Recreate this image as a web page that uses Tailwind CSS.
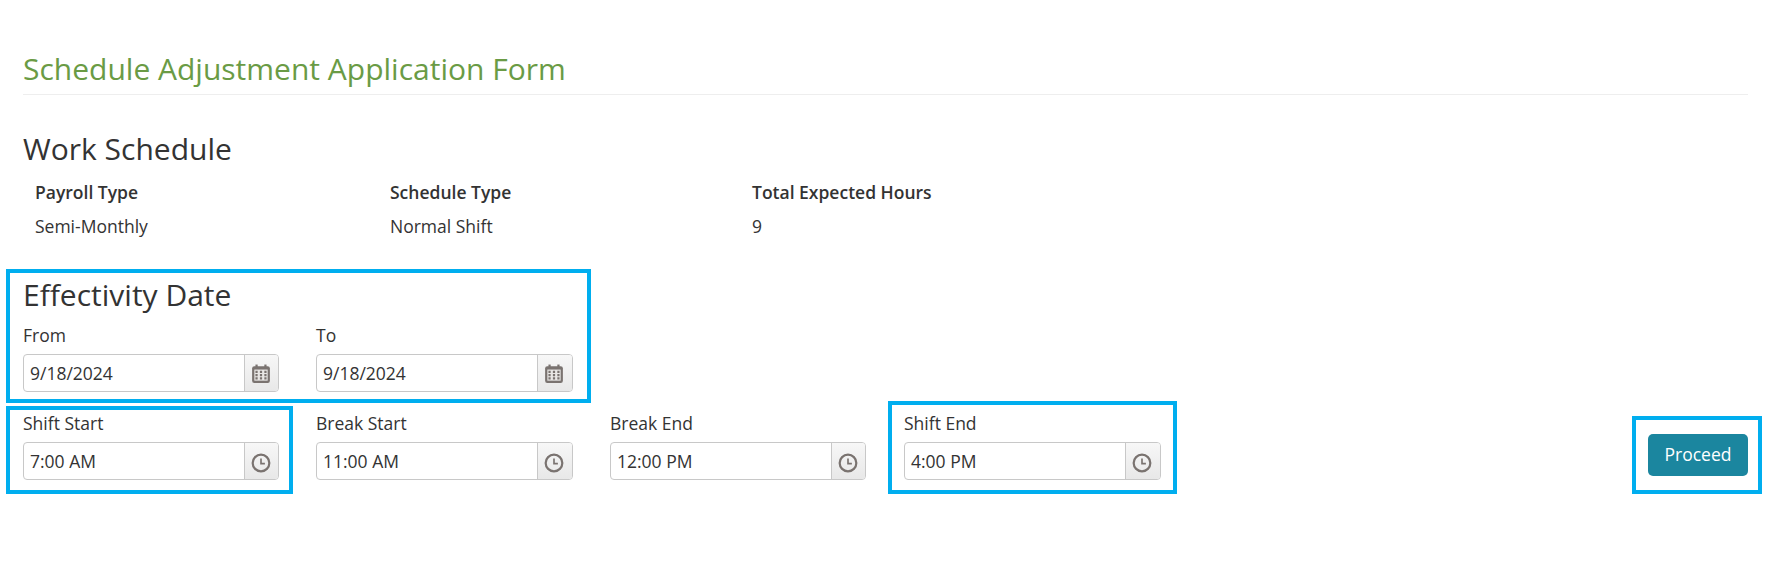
<!DOCTYPE html>
<html lang="en">
<head>
    <meta charset="UTF-8">
    <title>Schedule Adjustment Application Form</title>
    <script src="https://cdn.jsdelivr.net/npm/@tailwindcss/browser@4"></script>
</head>
<body class="bg-white text-[#333] font-['Open_Sans',sans-serif]">
    <!-- annotation boxes drawn over the form -->
    <div class="absolute left-[6px] top-[269px] w-[585px] h-[134px] border-4 border-[#00aeef]"></div>
    <div class="absolute left-[6px] top-[406px] w-[287px] h-[88px] border-4 border-[#00aeef]"></div>
    <div class="absolute left-[888px] top-[401px] w-[289px] h-[93px] border-4 border-[#00aeef]"></div>
    <div class="absolute left-[1632px] top-[416px] w-[130px] h-[78px] border-4 border-[#00aeef]"></div>

    <div class="w-[1771px] h-[580px] overflow-hidden pl-[23px] pr-[23px] pt-[49px]">
        <h1 class="text-[30px] leading-[40px] text-[#6a9b45] pb-[5px] border-b border-[#eeeeee]">Schedule Adjustment Application Form</h1>

        <h2 class="mt-[35px] text-[30px] leading-[38px] text-[#333]">Work Schedule</h2>
        <div class="mt-[12px] pl-[12px] flex text-[17.5px]">
            <div class="w-[355px]">
                <div class="font-semibold leading-[24px]">Payroll Type</div>
                <div class="mt-[10px] leading-[24px]">Semi-Monthly</div>
            </div>
            <div class="w-[362px]">
                <div class="font-semibold leading-[24px]">Schedule Type</div>
                <div class="mt-[10px] leading-[24px]">Normal Shift</div>
            </div>
            <div>
                <div class="font-semibold leading-[24px]">Total Expected Hours</div>
                <div class="mt-[10px] leading-[24px]">9</div>
            </div>
        </div>

        <h2 class="mt-[38px] text-[30px] leading-[38px] text-[#333]">Effectivity Date</h2>
        <div class="mt-[9px] flex gap-[37px]">
            <div class="w-[256px]">
                <label class="block text-[17.5px] leading-[24px]">From</label>
                <div class="mt-[7px] flex h-[38px] border border-[#c8c8c8] rounded-[4px] overflow-hidden">
                    <div class="flex-1 flex items-center pl-[6px] text-[17.5px]">9/18/2024</div>
                    <div class="w-[34px] flex items-center justify-center border-l border-[#c8c8c8] bg-gradient-to-b from-[#f7f7f7] to-[#e8e8e8]">
                        <svg width="20" height="20" viewBox="0 0 18 18" class="mt-[2px] mr-[2px]"><rect x="1" y="2" width="16" height="15" rx="2" fill="#7a7370"/><rect x="4" y="0.5" width="2" height="3" fill="#7a7370"/><rect x="12" y="0.5" width="2" height="3" fill="#7a7370"/><rect x="3" y="5" width="12" height="10" fill="#e8e6e4"/><path d="M4 6h2v2H4zM8 6h2v2H8zM12 6h2v2h-2zM4 9h2v2H4zM8 9h2v2H8zM12 9h2v2h-2zM4 12h2v2H4zM8 12h2v2H8zM12 12h2v2h-2z" fill="#7a7370"/></svg>
                    </div>
                </div>
            </div>
            <div class="w-[257px]">
                <label class="block text-[17.5px] leading-[24px]">To</label>
                <div class="mt-[7px] flex h-[38px] border border-[#c8c8c8] rounded-[4px] overflow-hidden">
                    <div class="flex-1 flex items-center pl-[6px] text-[17.5px]">9/18/2024</div>
                    <div class="w-[35px] flex items-center justify-center border-l border-[#c8c8c8] bg-gradient-to-b from-[#f7f7f7] to-[#e8e8e8]">
                        <svg width="20" height="20" viewBox="0 0 18 18" class="mt-[2px] mr-[2px]"><rect x="1" y="2" width="16" height="15" rx="2" fill="#7a7370"/><rect x="4" y="0.5" width="2" height="3" fill="#7a7370"/><rect x="12" y="0.5" width="2" height="3" fill="#7a7370"/><rect x="3" y="5" width="12" height="10" fill="#e8e6e4"/><path d="M4 6h2v2H4zM8 6h2v2H8zM12 6h2v2h-2zM4 9h2v2H4zM8 9h2v2H8zM12 9h2v2h-2zM4 12h2v2H4zM8 12h2v2H8zM12 12h2v2h-2z" fill="#7a7370"/></svg>
                    </div>
                </div>
            </div>
        </div>

        <div class="mt-[19px] flex items-start">
            <div class="flex gap-[37px]">
                <div class="w-[256px]">
                    <label class="block text-[17.5px] leading-[24px]">Shift Start</label>
                    <div class="mt-[7px] flex h-[38px] border border-[#c8c8c8] rounded-[4px] overflow-hidden">
                        <div class="flex-1 flex items-center pl-[6px] text-[17.5px]">7:00 AM</div>
                        <div class="w-[34px] flex items-center justify-center border-l border-[#c8c8c8] bg-gradient-to-b from-[#f7f7f7] to-[#e8e8e8]">
                            <svg width="20" height="20" viewBox="0 0 18 18" class="mt-[4px] mr-[2px]" fill="none" stroke="#7a7370"><circle cx="9" cy="9" r="7.5" stroke-width="2"/><path d="M9 5v4.5h3.5" stroke-width="1.5"/></svg>
                        </div>
                    </div>
                </div>
                <div class="w-[257px]">
                    <label class="block text-[17.5px] leading-[24px]">Break Start</label>
                    <div class="mt-[7px] flex h-[38px] border border-[#c8c8c8] rounded-[4px] overflow-hidden">
                        <div class="flex-1 flex items-center pl-[6px] text-[17.5px]">11:00 AM</div>
                        <div class="w-[35px] flex items-center justify-center border-l border-[#c8c8c8] bg-gradient-to-b from-[#f7f7f7] to-[#e8e8e8]">
                            <svg width="20" height="20" viewBox="0 0 18 18" class="mt-[4px] mr-[2px]" fill="none" stroke="#7a7370"><circle cx="9" cy="9" r="7.5" stroke-width="2"/><path d="M9 5v4.5h3.5" stroke-width="1.5"/></svg>
                        </div>
                    </div>
                </div>
                <div class="w-[256px]">
                    <label class="block text-[17.5px] leading-[24px]">Break End</label>
                    <div class="mt-[7px] flex h-[38px] border border-[#c8c8c8] rounded-[4px] overflow-hidden">
                        <div class="flex-1 flex items-center pl-[6px] text-[17.5px]">12:00 PM</div>
                        <div class="w-[34px] flex items-center justify-center border-l border-[#c8c8c8] bg-gradient-to-b from-[#f7f7f7] to-[#e8e8e8]">
                            <svg width="20" height="20" viewBox="0 0 18 18" class="mt-[4px] mr-[2px]" fill="none" stroke="#7a7370"><circle cx="9" cy="9" r="7.5" stroke-width="2"/><path d="M9 5v4.5h3.5" stroke-width="1.5"/></svg>
                        </div>
                    </div>
                </div>
                <div class="w-[257px] ml-px">
                    <label class="block text-[17.5px] leading-[24px]">Shift End</label>
                    <div class="mt-[7px] flex h-[38px] border border-[#c8c8c8] rounded-[4px] overflow-hidden">
                        <div class="flex-1 flex items-center pl-[6px] text-[17.5px]">4:00 PM</div>
                        <div class="w-[35px] flex items-center justify-center border-l border-[#c8c8c8] bg-gradient-to-b from-[#f7f7f7] to-[#e8e8e8]">
                            <svg width="20" height="20" viewBox="0 0 18 18" class="mt-[4px] mr-[2px]" fill="none" stroke="#7a7370"><circle cx="9" cy="9" r="7.5" stroke-width="2"/><path d="M9 5v4.5h3.5" stroke-width="1.5"/></svg>
                        </div>
                    </div>
                </div>
            </div>
            <button class="ml-auto mt-[23px] w-[100px] h-[42px] pb-px rounded-[5px] bg-[#1b869f] text-white text-[17.5px]">Proceed</button>
        </div>
    </div>
</body>
</html>
